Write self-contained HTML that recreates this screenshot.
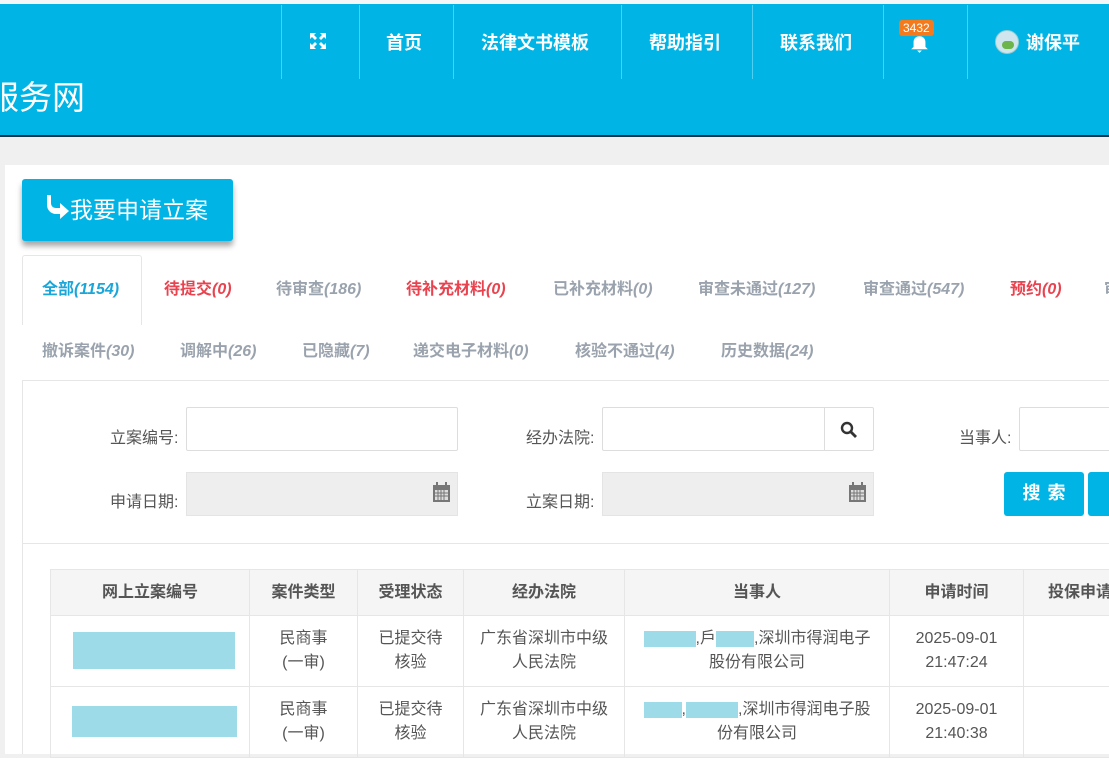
<!DOCTYPE html>
<html><head><meta charset="utf-8"><style>
*{margin:0;padding:0;box-sizing:border-box}
body{width:1109px;height:754px;overflow:hidden;background:#f0f0f0;font-family:"Liberation Sans","Noto Sans CJK SC",sans-serif;position:relative}
.a{position:absolute}
.hdr{left:0;top:0;width:1109px;height:137px;background:#00b4e5;border-bottom:2px solid #1f3442}
.sep{top:5px;width:1px;height:74px;background:#4fd0f2}
.nav{top:29px;color:#fff;font-size:18px;font-weight:bold}
.tab{font-size:16px;font-weight:bold;color:#9aa3ad}
.tab i{font-weight:bold}
.red{color:#e8434f}
.lbl{font-size:16px;color:#555}
.inp{background:#fff;border:1px solid #ddd;border-radius:2px}
.dis{background:#eee;border:1px solid #e4e4e4}
table{border-collapse:collapse;font-size:16px;color:#555}
td,th{border:1px solid #e6e6e6;text-align:center;line-height:24px}
th{background:#f5f5f5;height:46px;font-weight:bold;color:#555}
td{height:71px}
.blk{display:inline-block;background:#9ddbe9}
</style></head><body>
<div class="a hdr"></div>
<div class="a" style="left:0;top:0;width:1109px;height:4px;background:#f4f6f7"></div>
<div class="a" style="left:-14px;top:71px;color:#fff;font-size:33px">服务网</div>
<div class="a sep" style="left:281px"></div><div class="a sep" style="left:359px"></div><div class="a sep" style="left:453px"></div><div class="a sep" style="left:621px"></div><div class="a sep" style="left:752px"></div><div class="a sep" style="left:883px"></div><div class="a sep" style="left:967px"></div>
<svg class="a" style="left:309px;top:32px" width="18" height="18" viewBox="0 0 18 18" fill="#fff"><path d="M1 1h6L5 3l3 3-2 2-3-3-2 2zM17 1v6l-2-2-3 3-2-2 3-3-2-2zM1 17v-6l2 2 3-3 2 2-3 3 2 2zM17 17h-6l2-2-3-3 2-2 3 3 2-2z"/></svg>
<div class="a nav" style="left:386px">首页</div>
<div class="a nav" style="left:481px">法律文书模板</div>
<div class="a nav" style="left:649px">帮助指引</div>
<div class="a nav" style="left:780px">联系我们</div>
<div class="a" style="left:899px;top:20px;background:#f37b1d;color:#fff;font-size:12px;padding:1px 4px;border-radius:3px;line-height:14px">3432</div>
<svg class="a" style="left:910px;top:36px" width="19" height="17" viewBox="0 0 16 14" fill="#fff"><path d="M8 0c3 0 5 2 5 5v4l2 2H1l2-2V5c0-3 2-5 5-5zM6 12h4l-2 2z"/></svg>
<div class="a" style="left:995px;top:30px;width:24px;height:24px;border-radius:50%;background:#cfe6ee;border:1px solid #9cc"><div style="margin:10px 0 0 6px;width:12px;height:8px;background:#6bb54a;border-radius:4px"></div></div>
<div class="a nav" style="left:1026px">谢保平</div>

<div class="a" style="left:5px;top:165px;width:1104px;height:589px;background:#fff"></div>
<div class="a" style="left:22px;top:179px;width:211px;height:62px;background:#00b4e5;border-radius:3px;box-shadow:0 5px 6px rgba(0,0,0,.35);color:#fff;font-size:23px;line-height:62px;padding-left:20px">
<svg style="position:absolute;left:22px;top:16px" width="26" height="24" viewBox="0 0 26 24" fill="#fff"><path d="M3 0h4v8c0 3 2 5 5 5h4V8l9 8-9 8v-5h-4C7 19 3 15 3 10z"/></svg><span style="margin-left:28px">我要申请立案</span></div>

<div class="a" style="left:22px;top:255px;width:120px;height:70px;background:#fff;border:1px solid #e6e6e6;border-bottom:none;border-radius:3px 3px 0 0"></div>
<div class="a tab" style="left:42px;top:275px;color:#1aa6d9">全部<i>(1154)</i></div>
<div class="a tab red" style="left:164px;top:275px">待提交<i>(0)</i></div>
<div class="a tab" style="left:276px;top:275px">待审查<i>(186)</i></div>
<div class="a tab red" style="left:406px;top:275px">待补充材料<i>(0)</i></div>
<div class="a tab" style="left:553px;top:275px">已补充材料<i>(0)</i></div>
<div class="a tab" style="left:698px;top:275px">审查未通过<i>(127)</i></div>
<div class="a tab" style="left:863px;top:275px">审查通过<i>(547)</i></div>
<div class="a tab red" style="left:1010px;top:275px">预约<i>(0)</i></div>
<div class="a tab" style="left:1104px;top:275px">审</div>
<div class="a tab" style="left:42px;top:337px">撤诉案件<i>(30)</i></div>
<div class="a tab" style="left:180px;top:337px">调解中<i>(26)</i></div>
<div class="a tab" style="left:302px;top:337px">已隐藏<i>(7)</i></div>
<div class="a tab" style="left:413px;top:337px">递交电子材料<i>(0)</i></div>
<div class="a tab" style="left:575px;top:337px">核验不通过<i>(4)</i></div>
<div class="a tab" style="left:721px;top:337px">历史数据<i>(24)</i></div>

<div class="a" style="left:22px;top:380px;width:1087px;height:1px;background:#e6e6e6"></div>
<div class="a" style="left:22px;top:380px;width:1px;height:374px;background:#e6e6e6"></div>

<div class="a lbl" style="left:110px;top:424px">立案编号:</div>
<div class="a inp" style="left:186px;top:407px;width:272px;height:44px"></div>
<div class="a lbl" style="left:526px;top:424px">经办法院:</div>
<div class="a inp" style="left:602px;top:407px;width:272px;height:44px"></div>
<div class="a" style="left:824px;top:408px;width:1px;height:42px;background:#ddd"></div>
<svg class="a" style="left:840px;top:421px" width="18" height="18" viewBox="0 0 18 18"><circle cx="7" cy="7" r="5" fill="none" stroke="#333" stroke-width="2.4"/><path d="M11 11l5 5" stroke="#333" stroke-width="2.8"/></svg>
<div class="a lbl" style="left:959px;top:424px">当事人:</div>
<div class="a inp" style="left:1019px;top:407px;width:100px;height:44px"></div>
<div class="a lbl" style="left:110px;top:488px">申请日期:</div>
<div class="a dis" style="left:186px;top:472px;width:272px;height:44px"></div>
<div class="a lbl" style="left:526px;top:488px">立案日期:</div>
<div class="a dis" style="left:602px;top:472px;width:272px;height:44px"></div>
<svg class="a" style="left:432px;top:482px" width="19" height="21" viewBox="0 0 19 21"><rect x="1" y="3" width="17" height="17" fill="#777"/><rect x="3" y="8" width="13" height="10" fill="#ddd"/><path d="M3 11h13M3 14h13M6 8v10M9 8v10M12 8v10" stroke="#777"/><rect x="4" y="0" width="2" height="5" fill="#777"/><rect x="13" y="0" width="2" height="5" fill="#777"/></svg>
<svg class="a" style="left:848px;top:482px" width="19" height="21" viewBox="0 0 19 21"><rect x="1" y="3" width="17" height="17" fill="#777"/><rect x="3" y="8" width="13" height="10" fill="#ddd"/><path d="M3 11h13M3 14h13M6 8v10M9 8v10M12 8v10" stroke="#777"/><rect x="4" y="0" width="2" height="5" fill="#777"/><rect x="13" y="0" width="2" height="5" fill="#777"/></svg>
<div class="a" style="left:1004px;top:472px;width:80px;height:44px;background:#00b4e5;border-radius:3px;color:#fff;font-size:18px;font-weight:bold;text-align:center;line-height:42px;letter-spacing:7px;padding-left:7px">搜索</div>
<div class="a" style="left:1088px;top:472px;width:40px;height:44px;background:#00b4e5;border-radius:3px"></div>
<div class="a" style="left:22px;top:543px;width:1087px;height:1px;background:#e6e6e6"></div>

<table class="a" style="left:50px;top:569px;width:1100px">
<tr><th style="width:199px">网上立案编号</th><th style="width:108px">案件类型</th><th style="width:106px">受理状态</th><th style="width:161px">经办法院</th><th style="width:265px">当事人</th><th style="width:134px">申请时间</th><th style="text-align:left;padding-left:24px">投保申请</th></tr>
<tr><td><span class="blk" style="width:162px;height:37px;margin-top:6px;margin-left:8px"></span></td><td>民商事<br>(一审)</td><td>已提交待<br>核验</td><td>广东省深圳市中级<br>人民法院</td><td><span class="blk" style="width:52px;height:16px;vertical-align:middle"></span>,戶<span class="blk" style="width:38px;height:16px;vertical-align:middle"></span>,深圳市得润电子<br>股份有限公司</td><td>2025-09-01<br>21:47:24</td><td></td></tr>
<tr><td><span class="blk" style="width:165px;height:31px;margin-top:6px;margin-left:8px"></span></td><td>民商事<br>(一审)</td><td>已提交待<br>核验</td><td>广东省深圳市中级<br>人民法院</td><td><span class="blk" style="width:38px;height:16px;vertical-align:middle"></span>,<span class="blk" style="width:52px;height:16px;vertical-align:middle"></span>,深圳市得润电子股<br>份有限公司</td><td>2025-09-01<br>21:40:38</td><td></td></tr>
</table>
</body></html>
